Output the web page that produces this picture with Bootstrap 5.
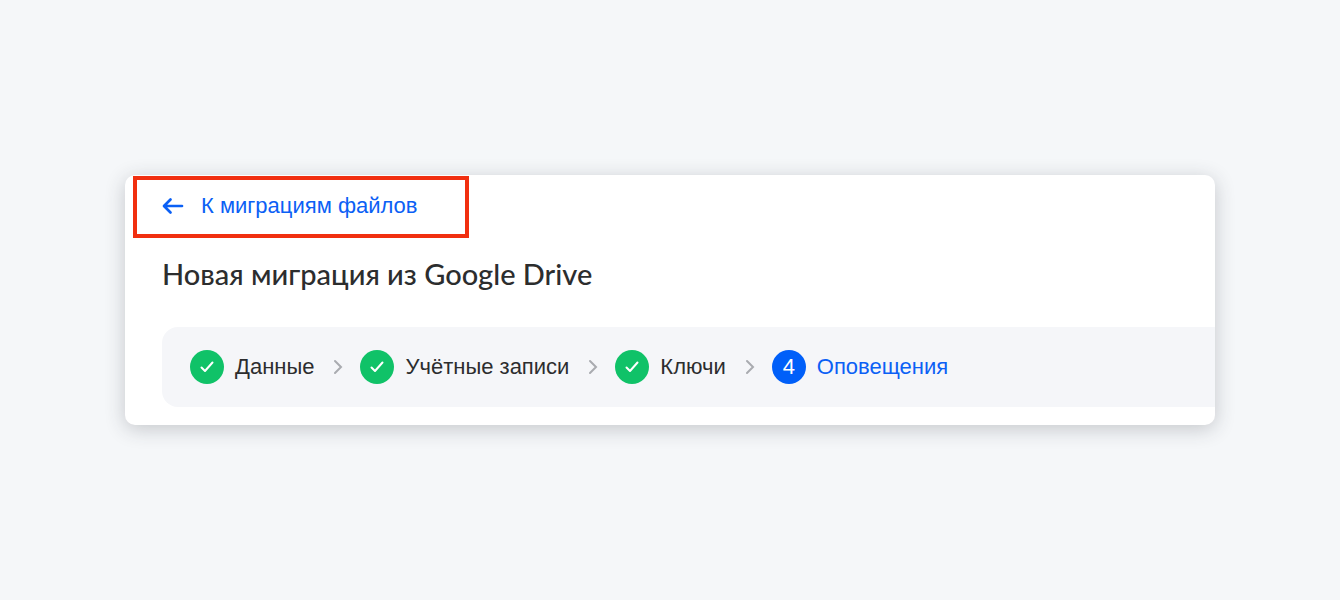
<!DOCTYPE html>
<html lang="ru">
<head>
<meta charset="utf-8">
<meta name="viewport" content="width=device-width, initial-scale=1">
<title>Новая миграция из Google Drive</title>
<link href="https://cdn.jsdelivr.net/npm/bootstrap@5.3.0/dist/css/bootstrap.min.css" rel="stylesheet">
<style>
  body { background: #f5f7f9; color: #2c2d2e; font-family: "Liberation Sans", Arial, sans-serif; font-size: 22px; line-height: 32px; }
  .page { padding: 24px 125px; }
  .panel { border-radius: 10px; box-shadow: 0 4px 20px rgba(40, 45, 60, .24); padding: 1px 0 18px; }
  .back-frame { margin-left: 8px; width: 336px; height: 62px; border: 4px solid #f12f10; padding: 0 0 2px 25px; }
  .accent { color: #0b60f5; }
  .back-link { gap: 17px; }
  .panel-title { font-family: Lato, "Open Sans", sans-serif; font-size: 29px; line-height: 36px; font-weight: 500; margin: 18px 0 35px 37px; }
  .steps { background: #f5f6f9; margin-left: 37px; height: 80px; padding: 0 28px; border-radius: 16px 0 0 16px; }
  .step { gap: 11px; }
  .step-mark { width: 34px; height: 34px; background: #10c268; flex: none; }
  .step-mark.current { background: #005ff9; }
  .step-sep { margin: 0 17px 0 19px; flex: none; }
</style>
</head>
<body>
<main class="page min-vh-100 d-flex flex-column justify-content-center">
  <section class="panel bg-white overflow-hidden">
    <div class="back-frame mw-100 d-flex align-items-center">
      <a href="#" class="back-link accent d-flex align-items-center text-decoration-none">
        <svg width="22" height="18" viewBox="0 0 22 18" fill="none" stroke="currentColor" stroke-width="2.7" stroke-linecap="round" stroke-linejoin="round" aria-hidden="true"><path d="M8.500 2.500 2 9l6.500 6.500M2.500 9H20"/></svg>
        <span>К миграциям файлов</span>
      </a>
    </div>
    <h1 class="panel-title">Новая миграция из Google Drive</h1>
    <ol class="steps list-unstyled d-flex align-items-center mb-0 text-nowrap">
      <li class="step d-flex align-items-center">
        <span class="step-mark rounded-circle d-flex align-items-center justify-content-center"><svg width="16" height="14" viewBox="0 0 16 14" fill="none" stroke="#fff" stroke-width="2" stroke-linecap="round" stroke-linejoin="round" aria-hidden="true"><path d="m2.500 7.500 3.500 3.500 7.500-8.500"/></svg></span>
        <span>Данные</span>
      </li>
      <li class="d-flex" aria-hidden="true"><svg class="step-sep" width="10" height="16" viewBox="0 0 10 16" fill="none" stroke="#a9abb0" stroke-width="2" stroke-linecap="round"><path d="m2 2 6 6-6 6"/></svg></li>
      <li class="step d-flex align-items-center">
        <span class="step-mark rounded-circle d-flex align-items-center justify-content-center"><svg width="16" height="14" viewBox="0 0 16 14" fill="none" stroke="#fff" stroke-width="2" stroke-linecap="round" stroke-linejoin="round" aria-hidden="true"><path d="m2.500 7.500 3.500 3.500 7.500-8.500"/></svg></span>
        <span>Учётные записи</span>
      </li>
      <li class="d-flex" aria-hidden="true"><svg class="step-sep" width="10" height="16" viewBox="0 0 10 16" fill="none" stroke="#a9abb0" stroke-width="2" stroke-linecap="round"><path d="m2 2 6 6-6 6"/></svg></li>
      <li class="step d-flex align-items-center">
        <span class="step-mark rounded-circle d-flex align-items-center justify-content-center"><svg width="16" height="14" viewBox="0 0 16 14" fill="none" stroke="#fff" stroke-width="2" stroke-linecap="round" stroke-linejoin="round" aria-hidden="true"><path d="m2.500 7.500 3.500 3.500 7.500-8.500"/></svg></span>
        <span>Ключи</span>
      </li>
      <li class="d-flex" aria-hidden="true"><svg class="step-sep" width="10" height="16" viewBox="0 0 10 16" fill="none" stroke="#a9abb0" stroke-width="2" stroke-linecap="round"><path d="m2 2 6 6-6 6"/></svg></li>
      <li class="step accent d-flex align-items-center" aria-current="step">
        <span class="step-mark current text-white rounded-circle d-flex align-items-center justify-content-center">4</span>
        <span>Оповещения</span>
      </li>
    </ol>
  </section>
</main>
<script src="https://cdn.jsdelivr.net/npm/bootstrap@5.3.0/dist/js/bootstrap.bundle.min.js"></script>
</body>
</html>
